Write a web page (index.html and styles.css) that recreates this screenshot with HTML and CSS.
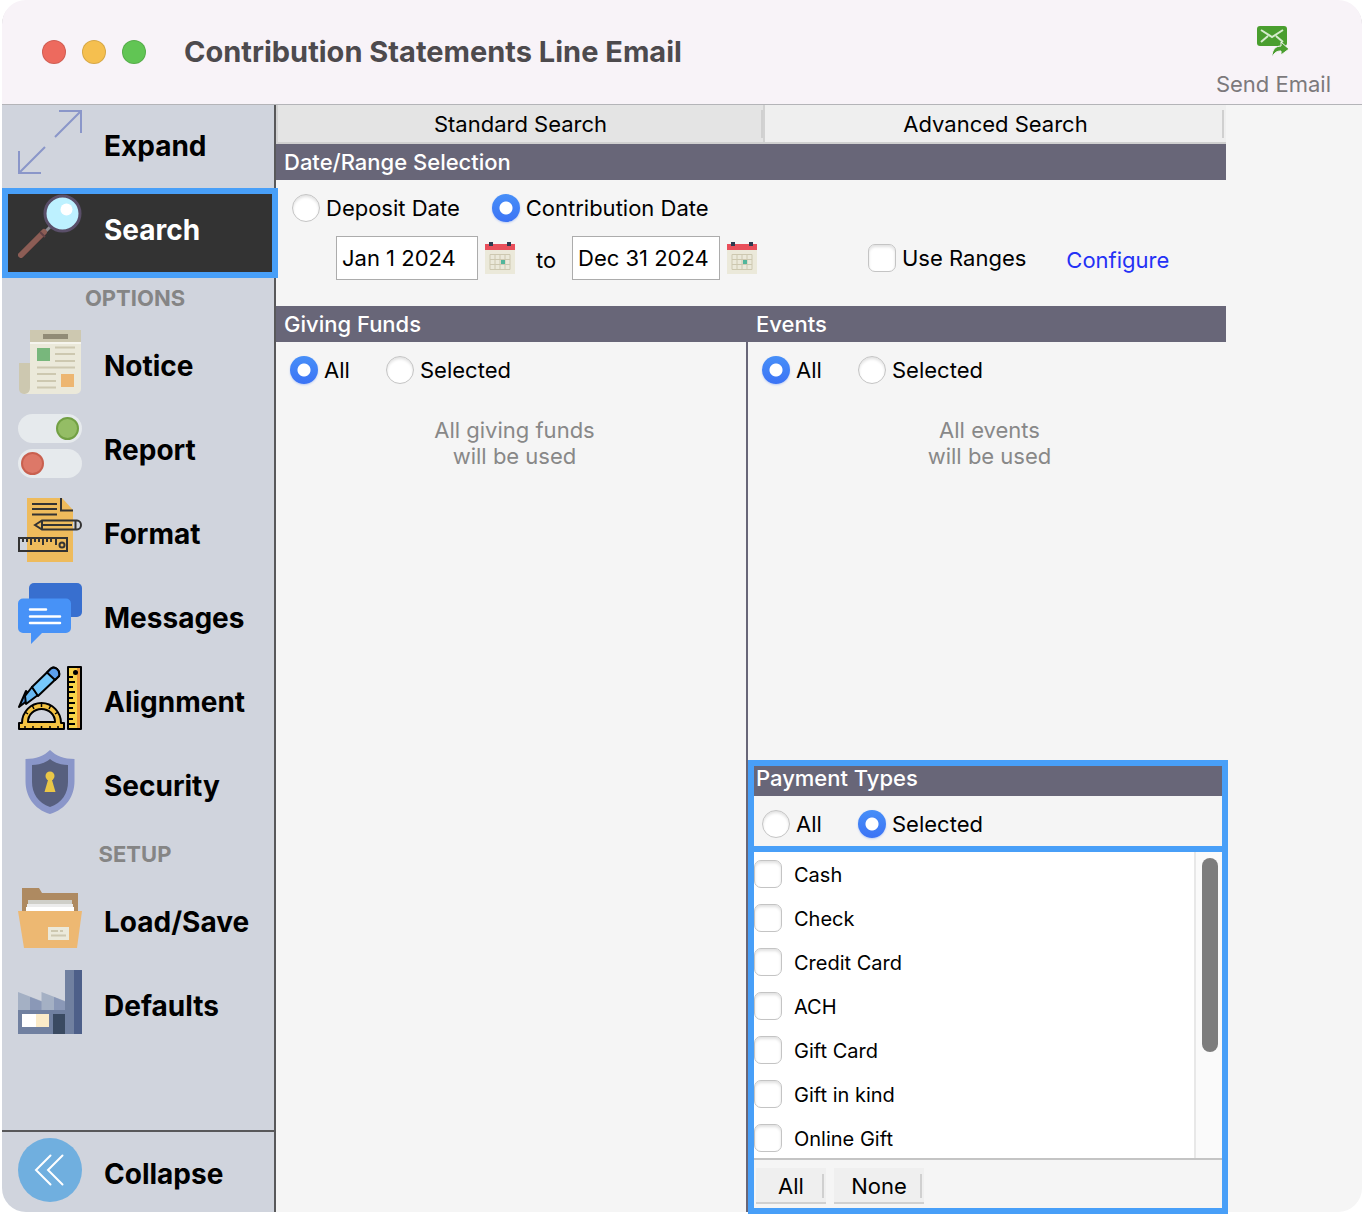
FILE: index.html
```
<!DOCTYPE html>
<html lang="en">
<head>
  <meta charset="UTF-8" />
  <meta name="viewport" content="width=device-width, initial-scale=1.0"/>
  <title>Contribution Statements Line Email</title>
  <link rel="stylesheet" href="styles.css">
</head>
<body>
  <div class="window">
    <header class="titlebar">
      <div class="lights">
        <span class="light red"></span>
        <span class="light yellow"></span>
        <span class="light green"></span>
      </div>
      <h1>Contribution Statements Line Email</h1>
      <button class="send-btn" type="button">
        <svg width="32" height="32" viewBox="0 0 32 32">
          <rect x="0" y="0" width="30" height="20" rx="3" fill="#4a9e2f"/>
          <path d="M4 4l11 7 11-7M4 16l7-6M26 16l-7-6" fill="none" stroke="#d5ebcd" stroke-width="2"/>
          <path d="M15 31c0-8 4-11 9-11v-4l8 7-8 6v-4c-4 0-6 1-9 6z" fill="#4a9e2f" stroke="#f8f3f8" stroke-width="1"/>
        </svg>
        Send Email
      </button>
    </header>

    <div class="body">
      <nav class="sidebar">
        <button class="nav-item" type="button">
          <svg viewBox="0 0 64 64" fill="none" stroke="#8a96c9" stroke-width="2">
            <path d="M37 27L63 1M41 1h22v22M27 37L1 63M1 41v22h22"/>
          </svg>
          Expand
        </button>
        <button class="nav-item active" type="button">
          <svg viewBox="0 0 64 64">
            <path d="M33 32l-6 6" stroke="#8d8d95" stroke-width="3"/>
            <path d="M26 38L3 61" stroke="#8c5d55" stroke-width="6" stroke-linecap="round"/>
            <path d="M28 40L5 63" stroke="#704844" stroke-width="1"/>
            <path d="M22 38l5 5" stroke="#634146" stroke-width="2"/>
            <circle cx="44.5" cy="19.5" r="17.5" fill="#bdf1ff" stroke="#5a4f69" stroke-width="3"/>
            <circle cx="48.5" cy="15.5" r="6" fill="#fff"/>
          </svg>
          Search
        </button>

        <h2 class="nav-title">OPTIONS</h2>
        <button class="nav-item" type="button">
          <svg viewBox="0 0 64 64">
            <path d="M1 33h14v26a5 5 0 0 1-5 5H6a5 5 0 0 1-5-5z" fill="#cdc8b0"/>
            <path d="M12 10h51v49a5 5 0 0 1-5 5H7q5-1 5-6z" fill="#ebe9da"/>
            <path d="M12 0h51v12H12z" fill="#cdc8b0"/>
            <path d="M12 12h51v2H12z" fill="#f6f5ee"/>
            <path d="M25 4h25v5H25z" fill="#918b76"/>
            <path d="M19 18h13v13H19z" fill="#78b77c"/>
            <path d="M43 44h13v13H43z" fill="#edb671"/>
            <path d="M37 17.5h20M37 24h20M37 31h20M19 37.5h38M19 44h19M19 51h19M19 57.5h19" stroke="#cdc8b0" stroke-width="2"/>
          </svg>
          Notice
        </button>
        <button class="nav-item" type="button">
          <svg viewBox="0 0 64 64">
            <rect width="64" height="29" rx="14.5" fill="#e6eaed"/>
            <rect y="35" width="64" height="29" rx="14.5" fill="#e6eaed"/>
            <circle cx="49.5" cy="14.5" r="10.5" fill="#94bd65" stroke="#72a044" stroke-width="2"/>
            <circle cx="14.5" cy="49.5" r="10.5" fill="#dd7868" stroke="#c9604f" stroke-width="2"/>
          </svg>
          Report
        </button>
        <button class="nav-item" type="button">
          <svg viewBox="0 0 64 64" fill="none" stroke="#333" stroke-width="2">
            <path d="M9 0h35l11 12v52H9z" fill="#eebb5c" stroke="none"/>
            <path d="M43 0v12.5h12M14 6h25M14 11h25M14 16.5h25"/>
            <path d="M17 27l7-4.5h35a4 4.5 0 0 1 0 9H24zM24 27h30M24 22.5v9M57.5 22.5v9"/>
            <path d="M1 40h48v13H1zM5 40v4M9 40v4M13 40v7M17 40v4M21 40v4M25 40v7M29 40v4M33 40v4M38 40v7"/>
            <circle cx="44" cy="47" r="2.5"/>
          </svg>
          Format
        </button>
        <button class="nav-item" type="button">
          <svg viewBox="0 0 64 64">
            <rect x="11" y="1" width="53" height="34" rx="5" fill="#386fcf"/>
            <path d="M5 16.5h43a5 5 0 0 1 5 5V46a5 5 0 0 1-5 5H24L13 62V51H5a5 5 0 0 1-5-5V21.5a5 5 0 0 1 5-5z" fill="#4792f7"/>
            <path d="M12 27.5h16M12 34.5h30M12 41h30" stroke="#fff" stroke-width="2.5" stroke-linecap="round"/>
          </svg>
          Messages
        </button>
        <button class="nav-item" type="button">
          <svg viewBox="0 0 64 64" stroke="#000" stroke-width="2" stroke-linejoin="round">
            <rect x="50" y="1" width="13" height="62" fill="#f8d348"/>
            <path d="M60.5 2v60" stroke="#ee9a3a" stroke-width="3"/>
            <path d="M51 11h4M51 16h6M51 21h4M51 26h6M51 32h4M51 37h6M51 42h4M51 47h6M51 53h4M51 58h6"/>
            <circle cx="57.5" cy="6.5" r="1.5"/>
            <path d="M1 41l7-16 6 6z" fill="#4a8fdc"/>
            <path d="M7 30L14 21l6 8-12 9z" fill="#68b8f2"/>
            <path d="M14 21L33 2.5q3-2 6 .5t2 7L20 30z" fill="#76c8fb"/>
            <path d="M29 6.5l4-4q3-2 6 .5t2 7l-4 4z" fill="#5b9fee"/>
            <path d="M1 57h3a19.5 20 0 0 1 39 0h3v6H1zM10 56h27a13.5 13 0 0 0-27 0z" fill="#f4c342"/>
            <path d="M23.5 37v4M14 39l2 4M33 39l-2 4M7 46l3 2M40 46l-3 2M7 63v-3M15 63v-3M23.5 63v-3M32 63v-3M40 63v-3" stroke-width="1.5"/>
          </svg>
          Alignment
        </button>
        <button class="nav-item" type="button">
          <svg viewBox="0 0 64 64">
            <path d="M32 0c6 6 14 9 24.5 9v22c0 15-8 28-24.5 33C15.5 59 7.5 46 7.5 31V9C18 9 26 6 32 0z" fill="#8a96c9"/>
            <path d="M32 9c5 4 11 6 18 6v17c0 11-6 21-18 25-12-4-18-14-18-25V15c7 0 13-2 18-6z" fill="#575f7e"/>
            <path d="M26.5 42L30 30h4l3.5 12z" fill="#e9c647"/>
            <circle cx="32" cy="26" r="4.5" fill="#e9c647"/>
          </svg>
          Security
        </button>

        <h2 class="nav-title">SETUP</h2>
        <button class="nav-item" type="button">
          <svg viewBox="0 0 64 64">
            <path d="M4 2h17l3 5h36v22H4z" fill="#ae8a61"/>
            <path d="M10 14h44v5H10z" fill="#cfcfc9"/>
            <path d="M9 18h46v4H9z" fill="#ececec"/>
            <path d="M8 21h48v5H8z" fill="#fff"/>
            <path d="M0 25h64l-5 37H6z" fill="#edb872"/>
            <path d="M30 41h21v13H30z" fill="#ebe9da"/>
            <path d="M33 45h7M42 45h3M33 49.5h15" stroke="#cdc8b0" stroke-width="2"/>
          </svg>
          Load/Save
        </button>
        <button class="nav-item" type="button">
          <svg viewBox="0 0 64 64">
            <path d="M0 22l23.5 9v-9L47 31v11H0z" fill="#a4b0c4"/>
            <path d="M12 27l11.5 4.5V42H12zM36 27l11 4.5V42H36z" fill="#8a98b7"/>
            <path d="M0 40h47V0h9v64H0z" fill="#7080a0"/>
            <path d="M56 0h8v64h-8z" fill="#4d5f89"/>
            <path d="M4 44h14v13H4z" fill="#fff"/>
            <path d="M18 44h13v13H18z" fill="#fbebc8"/>
            <path d="M35 44h12v20H35z" fill="#3a4a61"/>
          </svg>
          Defaults
        </button>

        <button class="nav-item collapse" type="button">
          <svg viewBox="0 0 64 64">
            <circle cx="32" cy="32" r="32" fill="#70afdf"/>
            <path d="M32.5 17.5L18 32l14.5 14.5M44.5 17.5L30 32l14.5 14.5" fill="none" stroke="#fff" stroke-width="2" stroke-linecap="round"/>
          </svg>
          Collapse
        </button>
      </nav>

      <main class="content">
        <div class="tabs">
          <button class="tab selected" type="button">Standard Search</button>
          <button class="tab" type="button">Advanced Search</button>
        </div>

        <section class="dates">
          <h2 class="bar">Date/Range Selection</h2>
          <div class="date-type">
            <label class="option"><input type="radio" name="datetype">Deposit Date</label>
            <label class="option"><input type="radio" name="datetype" checked>Contribution Date</label>
          </div>
          <div class="date-range">
            <input class="date-from" type="text" value="Jan 1 2024" aria-label="From date">
            <button class="cal-btn" type="button" aria-label="Pick from date">
              <svg width="30" height="32" viewBox="0 0 30 32">
                <path d="M0 8h30v24H0z" fill="#ebe9da"/>
                <path d="M0 2h30v6H0z" fill="#e94f5b"/>
                <path d="M4 0h4v4H4zM22 0h4v4h-4z" fill="#2d3b50"/>
                <path d="M5 12.5h20v15H5zM5 17.5h20M5 22.5h20M10 12.5v15M15 12.5v15M20 12.5v15" fill="none" stroke="#cdc8b0"/>
                <path d="M16 18h4v4h-4z" fill="#51b69b"/>
              </svg>
            </button>
            <span class="to">to</span>
            <input class="date-to" type="text" value="Dec 31 2024" aria-label="To date">
            <button class="cal-btn" type="button" aria-label="Pick to date">
              <svg width="30" height="32" viewBox="0 0 30 32">
                <path d="M0 8h30v24H0z" fill="#ebe9da"/>
                <path d="M0 2h30v6H0z" fill="#e94f5b"/>
                <path d="M4 0h4v4H4zM22 0h4v4h-4z" fill="#2d3b50"/>
                <path d="M5 12.5h20v15H5zM5 17.5h20M5 22.5h20M10 12.5v15M15 12.5v15M20 12.5v15" fill="none" stroke="#cdc8b0"/>
                <path d="M16 18h4v4h-4z" fill="#51b69b"/>
              </svg>
            </button>
            <label class="option use-ranges"><input type="checkbox">Use Ranges</label>
            <a class="configure" href="#">Configure</a>
          </div>
        </section>

        <div class="columns">
          <section class="funds">
            <h2 class="bar">Giving Funds</h2>
            <div class="choice">
              <label class="option"><input type="radio" name="funds" checked>All</label>
              <label class="option"><input type="radio" name="funds">Selected</label>
            </div>
            <p class="empty">All giving funds<br>will be used</p>
          </section>

          <div class="right-col">
            <section class="events">
              <h2 class="bar">Events</h2>
              <div class="choice">
                <label class="option"><input type="radio" name="events" checked>All</label>
                <label class="option"><input type="radio" name="events">Selected</label>
              </div>
              <p class="empty">All events<br>will be used</p>
            </section>

            <section class="payments">
              <div class="payments-head">
                <h2 class="bar">Payment Types</h2>
                <div class="choice">
                  <label class="option"><input type="radio" name="payments">All</label>
                  <label class="option"><input type="radio" name="payments" checked>Selected</label>
                </div>
              </div>
              <div class="payments-body">
                <div class="list">
                  <div class="list-items">
                    <label class="list-item"><input type="checkbox"><span>Cash</span></label>
                    <label class="list-item"><input type="checkbox"><span>Check</span></label>
                    <label class="list-item"><input type="checkbox"><span>Credit Card</span></label>
                    <label class="list-item"><input type="checkbox"><span>ACH</span></label>
                    <label class="list-item"><input type="checkbox"><span>Gift Card</span></label>
                    <label class="list-item"><input type="checkbox"><span>Gift in kind</span></label>
                    <label class="list-item"><input type="checkbox"><span>Online Gift</span></label>
                  </div>
                  <div class="scrollbar"><div class="thumb"></div></div>
                </div>
                <div class="list-actions">
                  <button class="small-btn" type="button">All</button>
                  <button class="small-btn none" type="button">None</button>
                </div>
              </div>
            </section>
          </div>
        </div>
      </main>
    </div>
  </div>
</body>
</html>
```
FILE: styles.css
```
* { box-sizing:border-box; }
body { margin:0; padding:0 0 4px 2px; background:#fff; color:#000; font-family:Inter,"Liberation Sans",sans-serif; font-size:22px; line-height:26px; }
h1, h2, p { margin:0; }
button { font:inherit; color:inherit; border:none; background:none; padding:0; cursor:pointer; }
svg { display:block; flex:none; }

.window { display:flex; flex-direction:column; min-height:calc(100vh - 4px); }

/* title bar */
.titlebar { display:flex; align-items:center; height:104px; padding:0 31px 0 40px; background:#f8f3f8; border-radius:24px 24px 0 0; box-shadow:0 1px 0 #b4b4b8; position:relative; z-index:1; }
.lights { display:flex; gap:16px; }
.light { width:24px; height:24px; border-radius:50%; border:1px solid rgba(0,0,0,0.12); }
.red { background:#ed6a5e; }
.yellow { background:#f5bf4f; }
.green { background:#61c554; }
h1 { margin-left:38px; font-size:29px; line-height:36px; font-weight:700; color:#4d4a4d; }
.send-btn { display:flex; flex-direction:column; align-items:center; gap:13px; margin-left:auto; padding-top:18px; color:#7c797c; }

.body { display:flex; flex:1; }

/* sidebar */
.sidebar { display:flex; flex-direction:column; width:274px; background:#d0d4dd; border-right:2px solid #58585a; border-bottom-left-radius:24px; }
.nav-item { display:flex; align-items:center; gap:22px; height:84px; padding:0 0 0 16px; font-size:28px; font-weight:700; text-align:left; position:relative; }
.nav-item svg { width:64px; height:64px; margin-bottom:8px; }
.nav-item.active { background:#333; color:#fff; }
.nav-item.active::after { content:""; position:absolute; inset:0 -4px -6px 0; border:6px solid #489ff8; z-index:2; }
.nav-title { padding:0 6px 0 0; font-size:22px; line-height:52px; font-weight:700; color:#858585; text-align:center; }
.nav-item.collapse { height:82px; margin-top:auto; padding-top:4px; border-top:2px solid #58585a; }

/* search panel */
.content { display:flex; flex-direction:column; flex:1; padding-right:136px; background:#f5f5f5; border-bottom-right-radius:24px; }
.tabs { display:flex; height:40px; border-bottom:2px solid #d0d0d0; }
.tab { flex:462; padding-top:2px; background:#efefef; position:relative; }
.tab.selected { flex:486; background:#e4e4e4; border:2px solid #d2d2d2; border-width:0 2px; }
.tab::after, .small-btn::after { content:""; position:absolute; top:6px; bottom:4px; right:2px; width:2px; background:#d0d0d0; }
.tab.selected::after { right:0; }
.bar { height:36px; padding:0 8px; background:#686678; color:#fff; font-size:22px; line-height:36px; font-weight:500; }
.option { display:flex; align-items:center; gap:6px; }

input[type="radio"], input[type="checkbox"] { appearance:none; flex:none; width:28px; height:28px; margin:0; background:#fff; border:1px solid #c4c4c4; box-shadow:inset 0 2px 3px rgba(0,0,0,0.12); }
input[type="radio"] { border-radius:50%; }
input[type="checkbox"] { border-radius:7px; }
input[type="radio"]:checked { border:none; background:radial-gradient(circle,#fff 6px,transparent 7px),linear-gradient(#478ff8,#3b73f5); box-shadow:0 1px 2px rgba(59,115,245,0.3); }

.dates { height:162px; }
.date-type { display:flex; gap:32px; padding:14px 16px 0; }
.date-range { display:flex; align-items:center; height:44px; margin-top:14px; padding-left:60px; }
.date-range input[type="text"] { height:44px; padding:0 5px; border:1px solid #acacac; background:#fff; font:inherit; color:#000; }
.date-from { width:142px; }
.date-to { width:148px; }
.cal-btn { margin-left:7px; }
.to { width:57px; padding:4px 0 0 21px; }
.use-ranges { margin-left:111px; }
.configure { margin-left:40px; padding-top:4px; color:#2431f5; text-decoration:none; }

.columns { display:flex; flex:1; }
.funds { flex:470; }
.right-col { flex:480; display:flex; flex-direction:column; background:linear-gradient(#686678,#686678) no-repeat left / 2px 100%; }
.right-col .bar { padding-left:10px; }
.choice { display:flex; height:50px; padding:6px 14px 0; }
.choice .option:first-child { width:96px; }
.right-col .choice { padding-left:16px; }
.empty { margin-top:25px; padding-left:7px; color:#888; text-align:center; }

/* payment types */
.payments { margin:auto 0 0 2px; }
.payments-head, .payments-body { position:relative; }
.payments-head::after, .payments-body::after { content:""; position:absolute; inset:0 -2px -6px 0; border:6px solid #489ff8; pointer-events:none; }
.payments-body::after { bottom:-2px; }
.payments .bar { padding-left:8px; }
.payments .choice { padding-left:14px; }
.list { display:flex; height:312px; padding:6px 4px 0 6px; overflow:hidden; }
.list-items { flex:1; background:#fff; }
.list-item { display:flex; align-items:center; gap:12px; height:44px; font-size:20px; }
.list-item span { padding-top:2px; }
.scrollbar { width:28px; padding:6px 4px 0 6px; background:#fafafa; border-left:2px solid #e8e8e8; }
.thumb { height:194px; border-radius:8px; background:#7d7d7d; }
.list-actions { display:flex; gap:8px; height:54px; padding:8px 8px 0; border-top:2px solid #c4c4c4; }
.small-btn { width:70px; height:36px; padding-top:2px; background:#efefef; border-bottom:2px solid #d0d0d0; position:relative; }
.small-btn.none { width:90px; }
```
